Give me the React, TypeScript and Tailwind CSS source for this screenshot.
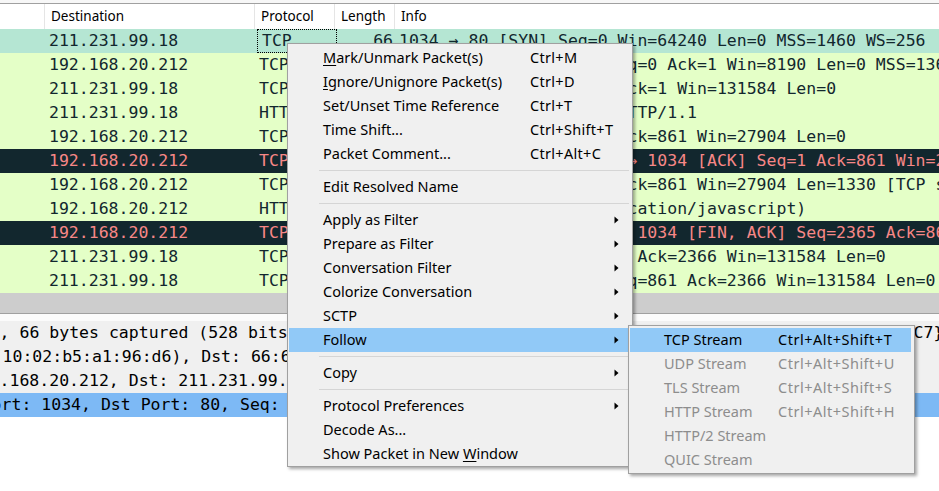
const packets = [
	{ dst: "211.231.99.18", proto: "TCP", len: "66", info: "1034 → 80 [SYN] Seq=0 Win=64240 Len=0 MSS=1460 WS=256", kind: "sel" },
	{ dst: "192.168.20.212", proto: "TCP", len: "66", info: "80 → 1034 [SYN, ACK] Seq=0 Ack=1 Win=8190 Len=0 MSS=1360 WS=1", kind: "tcp" },
	{ dst: "211.231.99.18", proto: "TCP", len: "54", info: "1034 → 80 [ACK] Seq=1 Ack=1 Win=131584 Len=0", kind: "tcp" },
	{ dst: "211.231.99.18", proto: "HTTP", len: "914", info: "GET /js/jquery.min.js HTTP/1.1", kind: "tcp" },
	{ dst: "192.168.20.212", proto: "TCP", len: "60", info: "80 → 1034 [ACK] Seq=1 Ack=861 Win=27904 Len=0", kind: "tcp" },
	{ dst: "192.168.20.212", proto: "TCP", len: "60", info: "[TCP Window Update] 80 → 1034 [ACK] Seq=1 Ack=861 Win=27904 Len=0", kind: "bad" },
	{ dst: "192.168.20.212", proto: "TCP", len: "1384", info: "80 → 1034 [ACK] Seq=1 Ack=861 Win=27904 Len=1330 [TCP segment of a reassembled PDU]", kind: "tcp" },
	{ dst: "192.168.20.212", proto: "HTTP", len: "1089", info: "HTTP/1.1 200 OK  (application/javascript)", kind: "tcp" },
	{ dst: "192.168.20.212", proto: "TCP", len: "60", info: "[TCP Out-Of-Order] 80 → 1034 [FIN, ACK] Seq=2365 Ack=861 Win=27904 Len=0", kind: "bad" },
	{ dst: "211.231.99.18", proto: "TCP", len: "54", info: "1034 → 80 [ACK] Seq=861 Ack=2366 Win=131584 Len=0", kind: "tcp" },
	{ dst: "211.231.99.18", proto: "TCP", len: "54", info: "1034 → 80 [FIN, ACK] Seq=861 Ack=2366 Win=131584 Len=0", kind: "tcp" },
];

const rowStyle = {
	sel: "bg-[#b5e6d3] text-[#12272e]",
	tcp: "bg-[#e4ffc7] text-[#12272e]",
	bad: "bg-[#12272e] text-[#f78787]",
};

const details = [
	{ text: "Frame 1: 66 bytes on wire (528 bits), 66 bytes captured (528 bits) on interface \\Device\\NPF_{6F1B2D4A-8C3E-4B7F-9A21-0D5E8B3F6A1C7}, id 0", cls: "ml-[-358px]", bg: "bg-[#f0f0f0]" },
	{ text: "Ethernet II, Src: Sagemcom_a1:96:d6 (10:02:b5:a1:96:d6), Dst: 66:6b:3d:2f:7e:01 (66:6b:3d:2f:7e:01)", cls: "ml-[-365px]", bg: "bg-[#f0f0f0]" },
	{ text: "Internet Protocol Version 4, Src: 192.168.20.212, Dst: 211.231.99.18", cls: "ml-[-368px]", bg: "bg-[#f0f0f0]" },
	{ text: "Transmission Control Protocol, Src Port: 1034, Dst Port: 80, Seq: 0, Len: 0", cls: "ml-[-366px]", bg: "bg-[#7db9f5]" },
];

type MenuItem = { label?: string; u?: number; shortcut?: string; arrow?: boolean; sep?: boolean; active?: boolean };

const menu: MenuItem[] = [
	{ label: "Mark/Unmark Packet(s)", u: 0, shortcut: "Ctrl+M" },
	{ label: "Ignore/Unignore Packet(s)", u: 0, shortcut: "Ctrl+D" },
	{ label: "Set/Unset Time Reference", shortcut: "Ctrl+T" },
	{ label: "Time Shift...", shortcut: "Ctrl+Shift+T" },
	{ label: "Packet Comment...", shortcut: "Ctrl+Alt+C" },
	{ sep: true },
	{ label: "Edit Resolved Name" },
	{ sep: true },
	{ label: "Apply as Filter", arrow: true },
	{ label: "Prepare as Filter", arrow: true },
	{ label: "Conversation Filter", arrow: true },
	{ label: "Colorize Conversation", arrow: true },
	{ label: "SCTP", arrow: true },
	{ label: "Follow", arrow: true, active: true },
	{ sep: true },
	{ label: "Copy", arrow: true },
	{ sep: true },
	{ label: "Protocol Preferences", arrow: true },
	{ label: "Decode As..." },
	{ label: "Show Packet in New Window", u: 19 },
];

const follow = [
	{ label: "TCP Stream", shortcut: "Ctrl+Alt+Shift+T", enabled: true },
	{ label: "UDP Stream", shortcut: "Ctrl+Alt+Shift+U" },
	{ label: "TLS Stream", shortcut: "Ctrl+Alt+Shift+S" },
	{ label: "HTTP Stream", shortcut: "Ctrl+Alt+Shift+H" },
	{ label: "HTTP/2 Stream" },
	{ label: "QUIC Stream" },
];

function Label({ text, u }: { text: string; u?: number }) {
	if (u === undefined) return <>{text}</>;
	return (
		<>
			{text.slice(0, u)}
			<span className="underline underline-offset-2">{text[u]}</span>
			{text.slice(u + 1)}
		</>
	);
}

function Arrow() {
	return (
		<svg width="5" height="8" viewBox="0 0 5 8">
			<path d="M0.5 0.5L4.5 4L0.5 7.5Z" fill="#000" />
		</svg>
	);
}

const mono = "font-['DejaVu_Sans_Mono',monospace] text-[16.5px]";

export default function App() {
	return (
		<div className="relative w-[939px] h-[491px] overflow-hidden bg-white font-['Noto_Sans',sans-serif]">
			{/* packet list */}
			<div className="h-[3px] bg-[#f7f7f7]" />
			<div className="h-px bg-[#a0a0a0]" />
			<div className="flex h-[25px] text-[13.5px] text-black leading-[25px]">
				<div className="w-[45px] shrink-0 border-r border-[#e5e5e5]" />
				<div className="w-[210px] shrink-0 border-r border-[#e5e5e5] pl-[6px]">Destination</div>
				<div className="w-[80px] shrink-0 border-r border-[#e5e5e5] pl-[6px]">Protocol</div>
				<div className="w-[60px] shrink-0 border-r border-[#e5e5e5] pl-[6px]">Length</div>
				<div className="flex-1 pl-[6px]">Info</div>
			</div>
			<div className={mono}>
				{packets.map((p, i) => (
					<div key={i} className={`flex h-[24px] leading-[23px] whitespace-pre ${rowStyle[p.kind]}`}>
						<div className="w-[45px] shrink-0" />
						<div className="w-[210px] shrink-0 pl-[4px]">{p.dst}</div>
						<div
							className={`w-[80px] shrink-0 pl-[4px] ${
								i === 0 ? "border border-dotted border-black ml-[2px] mr-px pl-[1px] leading-[21px]" : ""
							}`}
						>
							{p.proto}
						</div>
						<div className={`w-[60px] shrink-0 pr-[2px] text-right ${i === 0 ? "ml-[-3px]" : ""}`}>{p.len}</div>
						<div className="flex-1 overflow-hidden pl-[4px]">{p.info}</div>
					</div>
				))}
			</div>
			<div className="h-[20px] bg-[#cdcdcd]" />
			<div className="h-px bg-[#a0a0a0]" />
			<div className="h-[7px] bg-[#fbfbfb]" />

			{/* packet details */}
			<div className={`${mono} text-black`}>
				{details.map((d, i) => (
					<div key={i} className={`h-[24px] overflow-hidden leading-[23px] whitespace-pre ${d.bg}`}>
						<div className={d.cls}>{d.text}</div>
					</div>
				))}
			</div>

			{/* context menu */}
			<div className="absolute left-[287px] top-[43px] w-[346px] h-[424px] border border-[#a0a0a0] bg-[#f0f0f0] px-px pt-[2px] text-[14.5px] text-black shadow-[2px_2px_3px_rgba(0,0,0,0.35)]">
				{menu.map((m, i) =>
					m.sep ? (
						<div key={i} className="flex h-[9px] items-center pl-[30px] pr-[2px]">
							<div className="h-px flex-1 bg-[#d5d5d5]" />
						</div>
					) : (
						<div
							key={i}
							className={`flex h-[24px] items-center pl-[34px] pr-[12px] ${m.active ? "bg-[#91c9f7]" : ""}`}
						>
							<div className="w-[207px] shrink-0 whitespace-pre">
								<Label text={m.label!} u={m.u} />
							</div>
							<div className="flex-1 whitespace-pre tracking-[0.3px]">{m.shortcut}</div>
							{m.arrow && <Arrow />}
						</div>
					),
				)}
			</div>

			{/* follow submenu */}
			<div className="absolute left-[628px] top-[325px] w-[287px] h-[149px] border border-[#a0a0a0] bg-[#f0f0f0] pl-px pr-[3px] pt-[2px] text-[14.5px] shadow-[2px_2px_3px_rgba(0,0,0,0.35)]">
				{follow.map((f, i) => (
					<div
						key={i}
						className={`flex h-[24px] items-center pl-[34px] ${
							f.enabled ? "bg-[#91c9f7] text-black" : "text-[#8d8d8d]"
						}`}
					>
						<div className="w-[114px] shrink-0 whitespace-pre">{f.label}</div>
						<div className="whitespace-pre tracking-[0.5px]">{f.shortcut}</div>
					</div>
				))}
			</div>
		</div>
	);
}
